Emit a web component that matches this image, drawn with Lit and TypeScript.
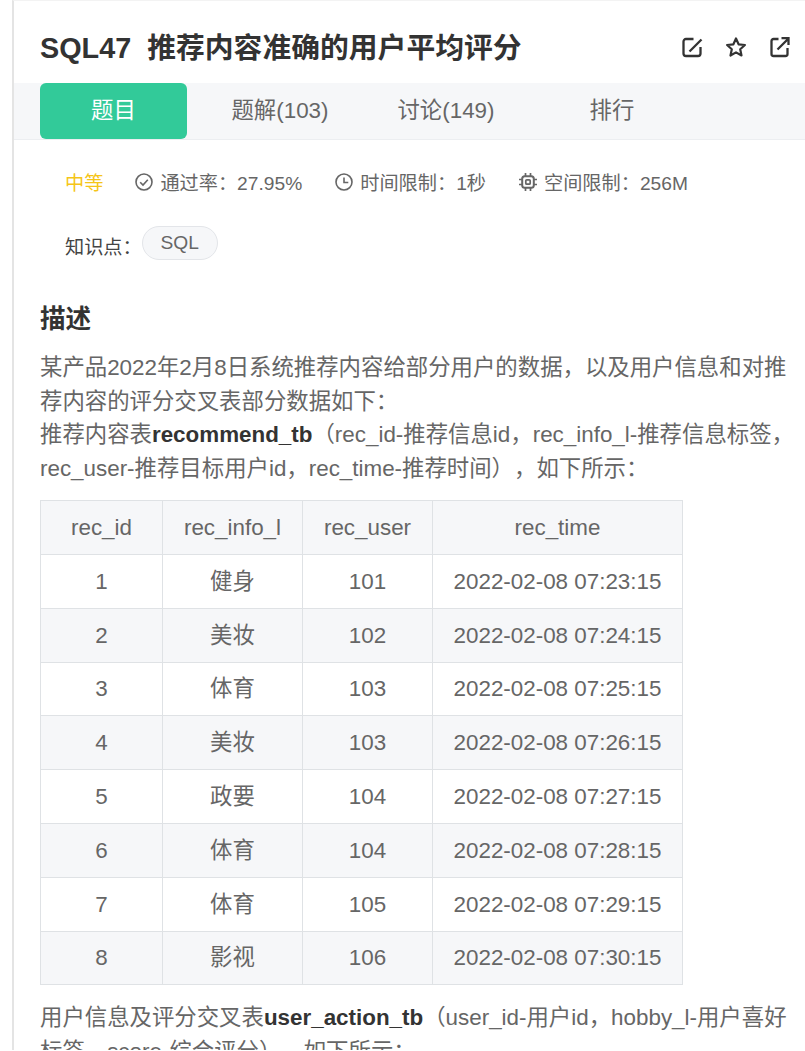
import { LitElement, html, css, svg } from "lit";
import { customElement } from "lit/decorators.js";

const rows = [
  ["1", "健身", "101", "2022-02-08 07:23:15"],
  ["2", "美妆", "102", "2022-02-08 07:24:15"],
  ["3", "体育", "103", "2022-02-08 07:25:15"],
  ["4", "美妆", "103", "2022-02-08 07:26:15"],
  ["5", "政要", "104", "2022-02-08 07:27:15"],
  ["6", "体育", "104", "2022-02-08 07:28:15"],
  ["7", "体育", "105", "2022-02-08 07:29:15"],
  ["8", "影视", "106", "2022-02-08 07:30:15"],
];

const editIcon = svg`<path d="M12.500 3H5a2.500 2.500 0 0 0-2.500 2.500v12A2.500 2.500 0 0 0 5 20h12a2.500 2.500 0 0 0 2.500-2.500V11" fill="none" stroke="currentColor" stroke-width="2.300"/><path d="M8.500 15.500 20.500 3.500" fill="none" stroke="currentColor" stroke-width="2.300"/>`;
const starIcon = svg`<path d="M11 2.500l2.600 5.800 6.300.7-4.700 4.300 1.300 6.200L11 16.400l-5.500 3.100 1.300-6.200L2.100 9l6.300-.7z" fill="none" stroke="currentColor" stroke-width="2.200" stroke-linejoin="round"/>`;
const shareIcon = svg`<path d="M9.500 3H4.500A2 2 0 0 0 2.500 5v13a2 2 0 0 0 2 2h12a2 2 0 0 0 2-2v-6" fill="none" stroke="currentColor" stroke-width="2.300"/><path d="M8.500 13.500 19 3M12.500 2.200h7V9" fill="none" stroke="currentColor" stroke-width="2.300"/>`;
const checkIcon = svg`<circle cx="9" cy="9" r="8" fill="none" stroke="currentColor" stroke-width="1.600"/><path d="M5.200 9.200 8 12l4.800-5.300" fill="none" stroke="currentColor" stroke-width="1.600"/>`;
const clockIcon = svg`<circle cx="9" cy="9" r="8" fill="none" stroke="currentColor" stroke-width="1.600"/><path d="M9 4.500V9.500h4.300" fill="none" stroke="currentColor" stroke-width="1.600"/>`;
const chipIcon = svg`<rect x="3.200" y="3.200" width="11.600" height="11.600" rx="2.500" fill="none" stroke="currentColor" stroke-width="2"/><rect x="6.800" y="6.800" width="4.400" height="4.400" rx="1" fill="none" stroke="currentColor" stroke-width="1.700"/><path d="M6.500 0v3M11.500 0v3M6.500 15v3M11.500 15v3M0 6.500h3M0 11.500h3M15 6.500h3M15 11.500h3" fill="none" stroke="currentColor" stroke-width="1.700"/>`;

@customElement("app-root")
export class AppRoot extends LitElement {
  static styles = css`
    :host {
      display: block;
      height: 1051px;
      overflow: hidden;
      background: #fff;
      font-family: "Liberation Sans", "Noto Sans CJK SC", sans-serif;
      color: #666;
      text-spacing-trim: space-all;
    }
    .page {
      margin-left: 12px;
      border-left: 2px solid #e4e4e4;
      border-top: 1px solid #f3f3f3;
      height: 1050px;
      overflow: hidden;
      box-sizing: border-box;
    }
    .head {
      height: 82px;
      box-sizing: border-box;
      padding: 6px 14px 0 26px;
      display: flex;
      align-items: center;
      justify-content: space-between;
    }
    h1 {
      margin: 0;
      font-size: 28.800px;
      font-weight: 700;
      color: #333;
      white-space: pre;
    }
    .actions {
      display: flex;
      gap: 22px;
      margin-top: 4px;
      color: #333;
    }
    .actions svg {
      width: 22px;
      height: 22px;
      display: block;
    }
    .tabs {
      height: 57px;
      box-sizing: border-box;
      background: #f6f7f9;
      border-bottom: 1px solid #eceef1;
      padding-left: 26px;
      display: flex;
      font-size: 22.400px;
    }
    .tab {
      height: 56px;
      box-sizing: border-box;
      padding-bottom: 6px;
      display: flex;
      align-items: center;
      justify-content: center;
      color: #666;
      width: 166px;
    }
    .tab.active {
      width: 147px;
      margin-right: 10px;
      background: #32ca99;
      color: #fff;
      border-radius: 6px;
    }
    .meta {
      display: flex;
      align-items: center;
      padding: 27px 0 0 51px;
      height: 30px;
      font-size: 19.200px;
    }
    .level {
      color: #f5c518;
      margin-right: 32px;
    }
    .meta-item {
      display: flex;
      align-items: center;
      gap: 7px;
      margin-right: 33px;
    }
    .meta-item svg {
      width: 18px;
      height: 18px;
      display: block;
    }
    .tags {
      display: flex;
      align-items: flex-start;
      padding: 29px 0 0 51px;
      font-size: 19.200px;
      color: #444;
    }
    .tag-label {
      padding-top: 6px;
    }
    .chip {
      height: 34px;
      width: 76px;
      box-sizing: border-box;
      border: 1px solid #e3e5e9;
      background: #f6f7f9;
      border-radius: 17px;
      display: flex;
      align-items: center;
      justify-content: center;
      color: #666;
    }
    .content {
      padding: 0 5px 0 26px;
      font-size: 22.400px;
      line-height: 33.600px;
    }
    h2 {
      margin: 41px 0 14px;
      font-size: 25.600px;
      line-height: 36px;
      font-weight: 700;
      color: #333;
    }
    .para { margin: 0; }
    .para b { color: #333; }
    table {
      margin: 15px 0 16px;
      border-collapse: collapse;
      table-layout: fixed;
      width: 642px;
    }
    th, td {
      border: 1px solid #dfe2e5;
      height: 53px;
      padding: 0;
      text-align: center;
      font-weight: 400;
      line-height: 30px;
    }
    tr:nth-child(4) td, tr:last-child td { height: 52px; }
    tr.head-row, tr.even { background: #f6f7f9; }
  `;

  render() {
    return html`<div class="page">
      <div class="head">
        <h1>SQL47  推荐内容准确的用户平均评分</h1>
        <div class="actions">
          <svg viewBox="0 0 22 22">${editIcon}</svg>
          <svg viewBox="0 0 22 22">${starIcon}</svg>
          <svg viewBox="0 0 22 22">${shareIcon}</svg>
        </div>
      </div>
      <div class="tabs">
        <div class="tab active">题目</div>
        <div class="tab">题解(103)</div>
        <div class="tab">讨论(149)</div>
        <div class="tab">排行</div>
      </div>
      <div class="meta">
        <span class="level">中等</span>
        <span class="meta-item"><svg viewBox="0 0 18 18">${checkIcon}</svg>通过率：27.95%</span>
        <span class="meta-item"><svg viewBox="0 0 18 18">${clockIcon}</svg>时间限制：1秒</span>
        <span class="meta-item"><svg viewBox="0 0 18 18">${chipIcon}</svg>空间限制：256M</span>
      </div>
      <div class="tags"><span class="tag-label">知识点：</span><span class="chip">SQL</span></div>
      <div class="content">
        <h2>描述</h2>
        <p class="para">某产品2022年2月8日系统推荐内容给部分用户的数据，以及用户信息和对推荐内容的评分交叉表部分数据如下：<br />推荐内容表<b>recommend_tb</b>（rec_id-推荐信息id，rec_info_l-推荐信息标签，rec_user-推荐目标用户id，rec_time-推荐时间），如下所示：</p>
        <table>
          <colgroup><col style="width:122px" /><col style="width:140px" /><col style="width:130px" /><col style="width:250px" /></colgroup>
          <tr class="head-row"><th>rec_id</th><th>rec_info_l</th><th>rec_user</th><th>rec_time</th></tr>
          ${rows.map(
            (r, i) => html`<tr class=${i % 2 === 1 ? "even" : ""}>${r.map((c) => html`<td>${c}</td>`)}</tr>`
          )}
        </table>
        <p class="para">用户信息及评分交叉表<b>user_action_tb</b>（user_id-用户id，hobby_l-用户喜好标签，score-综合评分），如下所示：</p>
      </div>
    </div>`;
  }
}
